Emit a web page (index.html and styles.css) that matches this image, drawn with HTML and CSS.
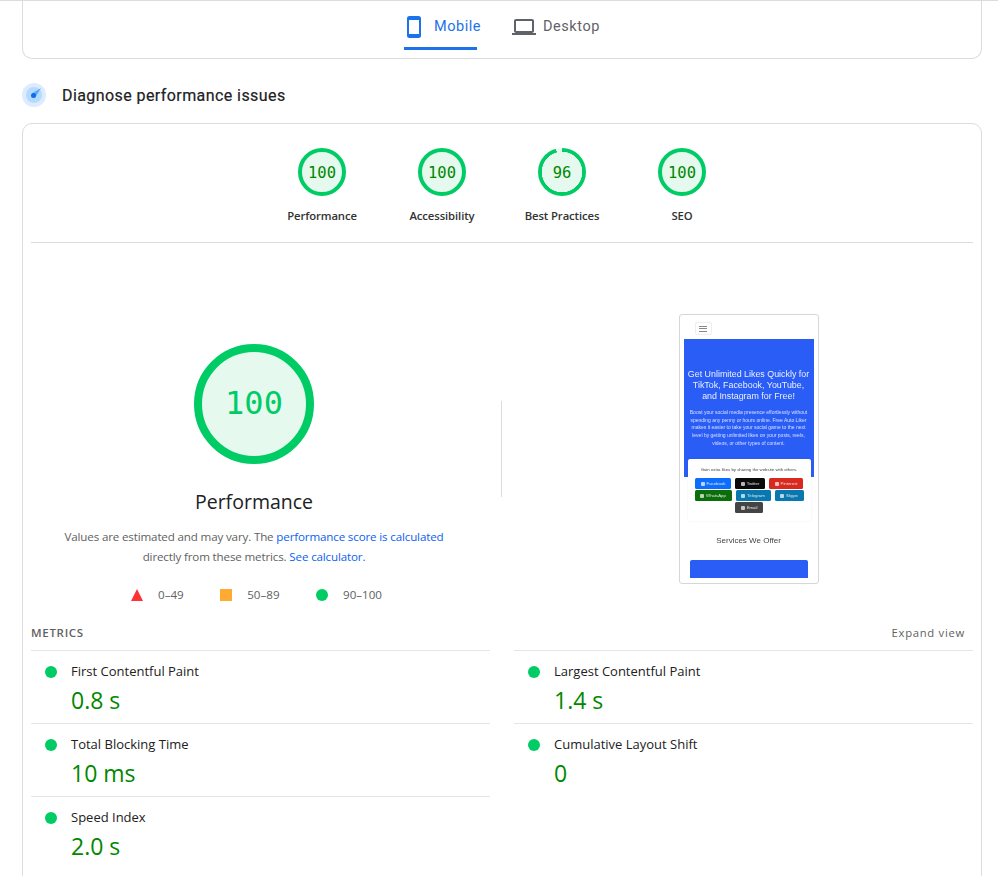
FILE: index.html
```html
<!DOCTYPE html>
<html lang="en">
<head>
<meta charset="utf-8">
<title>PageSpeed Insights</title>
<link rel="stylesheet" href="styles.css">
</head>
<body>
<div class="page">
  <section class="tabs-card">
    <nav class="tabs">
      <div class="tab tab-active">
        <svg class="tab-icon" viewBox="0 0 24 24" width="24" height="24"><path fill="#1a73e8" d="M16.5 1h-9A2.5 2.5 0 0 0 5 3.500v17A2.500 2.500 0 0 0 7.500 23h9a2.500 2.500 0 0 0 2.500-2.500v-17A2.500 2.500 0 0 0 16.500 1zM17 19H7V5h10v14z"/></svg>
        <span>Mobile</span>
      </div>
      <div class="tab tab-desktop">
        <svg class="tab-icon" viewBox="0 0 24 24" width="24" height="24"><path fill="#5f6368" d="M20 18c1.100 0 2-.9 2-2V6c0-1.100-.9-2-2-2H4c-1.100 0-2 .9-2 2v10c0 1.100.9 2 2 2H0v2h24v-2h-4zM4 6h16v10H4V6z"/></svg>
        <span>Desktop</span>
      </div>
    </nav>
  </section>

  <header class="diagnose">
    <svg class="diagnose-icon" viewBox="0 0 24 24" width="24" height="24">
      <circle cx="12" cy="12" r="12" fill="#dcebfe"/>
      <circle cx="12" cy="12" r="8" fill="#b6dafe"/>
      <path d="M19 5 L13.500 14 L10 10.500 Z" fill="#5aa8f8"/>
      <circle cx="11.500" cy="12.500" r="2.500" fill="#0b6cf0"/>
    </svg>
    <h2>Diagnose performance issues</h2>
  </header>

  <section class="report">
    <div class="gauges">
      <div class="gauge"><div class="ring ring-full">100</div><div class="gauge-label">Performance</div></div>
      <div class="gauge"><div class="ring ring-full">100</div><div class="gauge-label">Accessibility</div></div>
      <div class="gauge"><div class="ring ring-96">96</div><div class="gauge-label">Best Practices</div></div>
      <div class="gauge"><div class="ring ring-full">100</div><div class="gauge-label">SEO</div></div>
    </div>

    <div class="summary">
      <div class="score-col">
        <div class="big-ring">100</div>
        <div class="score-title">Performance</div>
        <p class="score-note">Values are estimated and may vary. The <a href="#">performance score is calculated</a> directly from these metrics. <a href="#">See calculator.</a></p>
        <div class="legend">
          <div class="legend-item"><span class="tri"></span>0–49</div>
          <div class="legend-item"><span class="sq"></span>50–89</div>
          <div class="legend-item"><span class="dot"></span>90–100</div>
        </div>
      </div>
      <div class="vrule"></div>
      <div class="shot-col">
        <div class="shot">
          <div class="shot-nav"><div class="burger"><i></i><i></i><i></i></div></div>
          <div class="hero">
            <div class="hero-title">Get Unlimited Likes Quickly for TikTok, Facebook, YouTube, and Instagram for Free!</div>
            <div class="hero-text">Boost your social media presence effortlessly without spending any penny or hours online. Free Auto Liker makes it easier to take your social game to the next level by getting unlimited likes on your posts, reels, videos, or other types of content.</div>
          </div>
          <div class="share">
            <div class="share-text">Gain extra likes by sharing the website with others.</div>
            <div class="share-btns">
              <span class="btn b-fb">Facebook</span><span class="btn b-tw">Twitter</span><span class="btn b-pi">Pinterest</span><span class="btn b-wa">WhatsApp</span><span class="btn b-te">Telegram</span><span class="btn b-sk">Skype</span><span class="btn b-em">Email</span>
            </div>
          </div>
          <div class="services">Services We Offer</div>
          <div class="service-box"></div>
        </div>
      </div>
    </div>

    <div class="metrics-head">
      <span class="metrics-title">METRICS</span>
      <span class="expand">Expand view</span>
    </div>
    <div class="metrics">
      <div class="metric"><span class="dot"></span><div><div class="m-name">First Contentful Paint</div><div class="m-value">0.8 s</div></div></div>
      <div class="metric"><span class="dot"></span><div><div class="m-name">Largest Contentful Paint</div><div class="m-value">1.4 s</div></div></div>
      <div class="metric"><span class="dot"></span><div><div class="m-name">Total Blocking Time</div><div class="m-value">10 ms</div></div></div>
      <div class="metric"><span class="dot"></span><div><div class="m-name">Cumulative Layout Shift</div><div class="m-value">0</div></div></div>
      <div class="metric"><span class="dot"></span><div><div class="m-name">Speed Index</div><div class="m-value">2.0 s</div></div></div>
    </div>
  </section>
</div>
</body>
</html>
```
FILE: styles.css
```css
* { box-sizing: border-box; }
html, body { margin: 0; height: 876px; overflow: hidden; background: #fff; }
body { font-family: "Open Sans", "Noto Sans", sans-serif; color: #212121; border-top: 1px solid #dadce0; }
.page { padding: 0 16px 0 22px; }

.tabs-card { height: 58px; border: 1px solid #dadce0; border-top: 0; border-radius: 0 0 10px 10px; }
.tabs { display: flex; padding-left: 381px; }
.tab { display: flex; align-items: center; gap: 7px; height: 49px; padding-top: 5px; font: 400 14.500px/20px Roboto, sans-serif; letter-spacing: .55px; color: #5f6368; border-bottom: 3px solid transparent; }
.tab-icon { flex: none; }
.tab-active { gap: 8px; width: 73px; color: #1a73e8; border-bottom-color: #1a73e8; }
.tab-active .tab-icon { margin-left: -2px; }
.tab-desktop { margin-left: 35px; }

.diagnose { display: flex; align-items: center; gap: 16px; height: 24px; margin-top: 24px; }
.diagnose h2 { margin: 0; padding-top: 1px; font: 400 16px/24px Roboto, sans-serif; letter-spacing: .42px; color: #202124; -webkit-text-stroke: .2px #202124; }

.report { margin-top: 16px; height: 800px; border: 1px solid #dadce0; border-radius: 10px; padding: 0 8px; }

.gauges { display: flex; justify-content: center; height: 119px; padding-top: 24px; border-bottom: 1px solid #dadce0; }
.gauge { width: 120px; display: flex; flex-direction: column; align-items: center; }
.ring { width: 48px; height: 48px; border-radius: 50%; display: flex; align-items: center; justify-content: center; padding-top: 1px; font: 15.500px "DejaVu Sans Mono", monospace; color: #008800; background: #e5f9ee; border: 4px solid #00cc66; }
.ring-96 { border: 0; background: radial-gradient(circle, #e5f9ee 0 20px, transparent 20.500px), conic-gradient(#00cc66 0 96%, #e5f9ee 96% 100%); }
.gauge-label { margin-top: 10px; font-size: 11.300px; line-height: 20px; font-weight: 600; color: #333; letter-spacing: -.1px; }

.summary { display: flex; height: 366px; }
.score-col { width: 446px; margin-right: 24px; flex: none; display: flex; flex-direction: column; align-items: center; padding-top: 101px; }
.big-ring { width: 120px; height: 120px; border-radius: 50%; background: #e5f9ee; border: 8px solid #00cc66; display: flex; align-items: center; justify-content: center; padding-bottom: 2px; font: 32px "DejaVu Sans Mono", monospace; color: #00cc66; }
.score-title { margin-top: 22px; font-size: 19.500px; line-height: 32px; color: #212121; }
.score-note { width: 400px; margin: 9px 0 0; text-align: center; font-size: 11.600px; line-height: 20px; color: #616161; letter-spacing: -.15px; }
.score-note a { color: #0b62f0; text-decoration: none; }
.legend { display: flex; gap: 36.500px; margin-top: 18px; padding-left: 5px; font-size: 11.600px; line-height: 20px; color: #616161; }
.legend-item { display: flex; align-items: center; gap: 15px; }
.tri { width: 0; height: 0; border-left: 6px solid transparent; border-right: 6px solid transparent; border-bottom: 12px solid #ff3333; }
.sq { width: 12px; height: 12px; background: #ffaa33; }
.dot { display: block; width: 12px; height: 12px; border-radius: 50%; background: #00cc66; flex: none; }

.vrule { width: 1px; height: 96px; margin-top: 158px; background: #dadce0; flex: none; }
.shot-col { flex: 1; display: flex; justify-content: center; padding-top: 71px; padding-left: 22px; }
.shot { width: 140px; height: 270px; border: 1px solid #d6d6d6; border-radius: 3px; background: #fff; padding: 0 4px; overflow: hidden; font-family: "Liberation Sans", sans-serif; }
.shot-nav { height: 24px; padding: 7px 0 0 11px; }
.burger { width: 17px; height: 13px; border: 1px solid #eee; border-radius: 2px; display: flex; flex-direction: column; justify-content: center; align-items: center; gap: 1.500px; }
.burger i { display: block; width: 8px; height: 1px; background: #888; }
.hero { height: 138px; background: #2a5cf6; color: #fff; text-align: center; padding: 30px 4px 0; }
.hero-title { margin: 0 -3px; font-size: 8.900px; line-height: 11px; opacity: .9; filter: blur(.2px); }
.hero-text { margin-top: 7px; font-size: 5px; line-height: 7.700px; opacity: .8; filter: blur(.25px); }
.share { position: relative; margin: -18px 0 0 4px; width: 123px; height: 62px; background: #fff; border-radius: 2px; box-shadow: 0 0 2px rgba(0,0,0,.08); padding-top: 8px; text-align: center; }
.share-text { font-size: 4.300px; line-height: 6px; color: #444; filter: blur(.2px); }
.share-btns { display: flex; flex-wrap: wrap; justify-content: center; margin-top: 5px; row-gap: 1px; column-gap: 4px; }
.btn { display: flex; align-items: center; justify-content: center; gap: 2px; height: 11px; border-radius: 1.500px; color: #e4e4e4; font-size: 4.300px; line-height: 11px; filter: blur(.25px); }
.btn::before { content: ""; width: 4px; height: 4px; border-radius: 1px; background: rgba(255,255,255,.7); }
.b-fb { background: #0d6efd; width: 36px; }
.b-tw { background: #0a0a0a; width: 30px; }
.b-pi { background: #d9281e; width: 34px; }
.b-wa { background: #0a6e0a; width: 37px; }
.b-te { background: #0879b0; width: 35px; }
.b-sk { background: #0879b0; width: 29px; }
.b-em { background: #444; width: 28px; }
.services { margin-top: 14px; text-align: center; font-size: 8px; line-height: 12px; color: #444; filter: blur(.2px); }
.service-box { margin: 13px 0 0 6px; width: 118px; height: 18px; background: #2a5cf6; border-radius: 2px 2px 0 0; }

.metrics-head { display: flex; justify-content: space-between; align-items: center; height: 20px; margin-top: 13px; padding-right: 8px; }
.metrics-title { font-size: 11.500px; font-weight: 600; letter-spacing: .7px; color: #616161; }
.expand { font-size: 11.300px; letter-spacing: .7px; color: #616161; }
.metrics { display: grid; grid-template-columns: 459px 459px; column-gap: 24px; margin-top: 8px; }
.metric { display: flex; gap: 14px; height: 73px; padding: 11px 0 0 14px; border-top: 1px solid #e5e5e5; }
.metric .dot { margin-top: 4px; }
.m-name { font-size: 13px; line-height: 18px; color: #212121; }
.m-value { font-size: 23px; line-height: 36px; color: #008800; margin-top: 2px; }
```
